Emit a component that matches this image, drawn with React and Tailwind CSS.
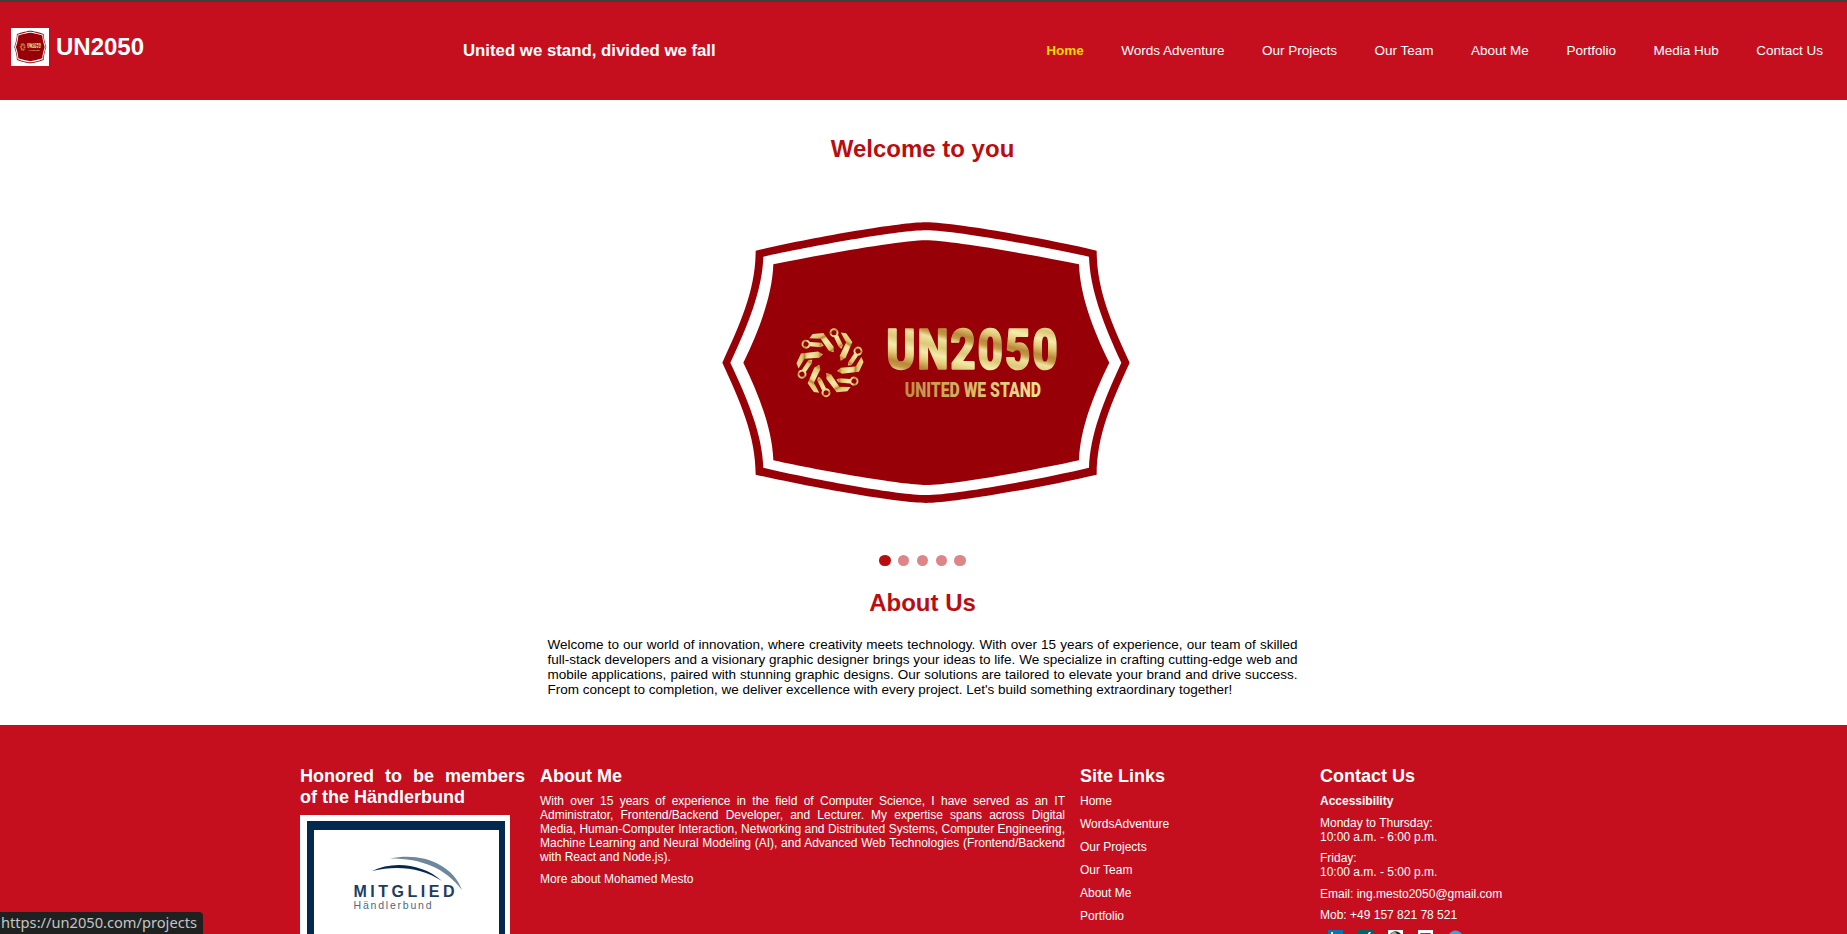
import React, { useId } from "react";

const NAV = ["Words Adventure", "Our Projects", "Our Team", "About Me", "Portfolio", "Media Hub", "Contact Us"];
const SITE_LINKS = ["Home", "WordsAdventure", "Our Projects", "Our Team", "About Me", "Portfolio"];

function Emblem({ className, viewBox, preserveAspectRatio }) {
  const id = useId().replace(/[^a-zA-Z0-9]/g, "");
  const gold = `url(#g${id})`;
  const soft = `url(#s${id})`;
  const ring = `url(#r${id})`;
  return (
    <svg className={className} viewBox={viewBox} preserveAspectRatio={preserveAspectRatio} aria-hidden="true">
      <defs>
        <linearGradient id={`g${id}`} gradientUnits="userSpaceOnUse" x1="600" y1="372" x2="570" y2="492" spreadMethod="repeat">
          <stop offset="0" stopColor="#c39a45" />
          <stop offset="0.12" stopColor="#efe2a0" />
          <stop offset="0.32" stopColor="#dcc878" />
          <stop offset="0.52" stopColor="#f5ecab" />
          <stop offset="0.7" stopColor="#e2cb78" />
          <stop offset="0.9" stopColor="#b9883a" />
          <stop offset="1" stopColor="#c39a45" />
        </linearGradient>
        <linearGradient id={`r${id}`} gradientUnits="userSpaceOnUse" x1="330" y1="400" x2="352" y2="442" spreadMethod="repeat">
          <stop offset="0" stopColor="#f3e9a6" />
          <stop offset="0.45" stopColor="#dfc670" />
          <stop offset="0.6" stopColor="#b98836" />
          <stop offset="0.75" stopColor="#ecd988" />
          <stop offset="1" stopColor="#f3e9a6" />
        </linearGradient>
        <linearGradient id={`s${id}`} x1="0" x2="1" y1="0" y2="0">
          <stop offset="0" stopColor="#bf8c45" />
          <stop offset="0.5" stopColor="#d9ba68" />
          <stop offset="1" stopColor="#f0e594" />
        </linearGradient>
      </defs>
      <path fill="#960006" d="M167 152C340 112 600 67 678 67S1017 112 1190 152C1190 270 1235 370 1289 488C1235 606 1190 706 1190 824C1017 864 756 909 678 909S340 864 167 824C167 706 121 606 67 488C121 370 167 270 167 152Z" />
      <path fill="#fff" d="M190 170C355 134 600 91 678 91S1002 134 1167 170C1170 270 1212 375 1264 488C1212 601 1170 703 1167 803C1002 842 756 885 678 885S355 842 190 803C187 703 144 601 91 488C144 375 187 270 190 170Z" />
      <path fill="#960006" d="M220 193C375 161 610 121 678 121S982 161 1137 193C1140 285 1178 387 1228 488C1178 589 1140 690 1137 781C982 815 746 855 678 855S375 815 220 781C217 690 179 589 130 488C179 387 217 285 220 193Z" />
      <g fill={ring}>
        {[0, 60, 120, 180, 240, 300].map((a) => (
          <g key={a} transform={`rotate(${a} 390 488)`}>
            <circle cx="402" cy="398" r="10.500" fill="none" stroke={ring} strokeWidth="6" />
            <path d="M402 411L414 405L429 436L424 446L416 440Z" />
            <path d="M328 415L338 402L370 399L401 440V457L387 453L362 416Z" />
          </g>
        ))}
      </g>
      <text x="559" y="508" textLength="520" lengthAdjust="spacingAndGlyphs" letterSpacing="7" fontFamily="Roboto,'Liberation Sans',sans-serif" fontWeight="900" fontSize="169" fill={gold} stroke={gold} strokeWidth="5" strokeLinejoin="bevel">UN2050</text>
      <text x="614" y="590" textLength="409" lengthAdjust="spacingAndGlyphs" fontFamily="Roboto,'Liberation Sans',sans-serif" fontWeight="900" fontSize="62" fill={soft}>UNITED WE STAND</text>
    </svg>
  );
}

function MemberBadge() {
  return (
    <div className="mt-[7px] h-[210px] w-[210px] bg-white pl-[7px] pr-[5px] pt-[6px]">
      <div className="h-[198px] border-x-[7px] border-t-[9px] border-[#03294f] border-r-[6px]">
        <svg className="block h-[104px] w-[185px]" viewBox="0 0 185 104" aria-hidden="true">
          <path fill="#6d879c" d="M76 28.500C106 22 138 33 148 60C131 38 108 28.500 76 28.500Z" />
          <path fill="#03294f" d="M58 41C78 31 108 33 128 51C108 38 84 35 58 41Z" />
          <text x="39.5" y="67" textLength="101" fontFamily="'Liberation Sans',sans-serif" fontWeight="700" fontSize="16" fill="#1d3d60">MITGLIED</text>
          <text x="39.5" y="79" textLength="78" fontFamily="'Liberation Sans',sans-serif" fontSize="10.5" fill="#4f6780">Händlerbund</text>
        </svg>
      </div>
    </div>
  );
}

function SocialIcons() {
  return (
    <div className="mt-[8px] flex gap-[15px] pl-2">
      <svg className="size-[15px]" viewBox="0 0 15 15"><path fill="#0277b5" d="M0 0h15v15H0z" /><path fill="#fff" d="M3 2h2v2H3zM3 5.500h2V12H3zM7 5.500h2V12H7z" /></svg>
      <svg className="size-[15px]" viewBox="0 0 15 15"><path fill="#026466" d="M0 0h15v15H0z" /><path fill="#fff" d="M11 2h2L9.500 8l2.500 5h-2L7.500 8z" /></svg>
      <svg className="size-[15px]" viewBox="0 0 15 15"><path fill="#fff" d="M0 0h15v15H0z" /><circle cx="7.500" cy="7.500" r="6.300" fill="#222" /><circle cx="6" cy="5" r="3" fill="#aaa" /></svg>
      <svg className="size-[15px]" viewBox="0 0 15 15"><path fill="#fff" d="M0 0h15v15H0z" /><rect x="2" y="3" width="11" height="9" rx="1" fill="#d3202c" /></svg>
      <svg className="size-[15px]" viewBox="0 0 15 15"><circle cx="7.500" cy="8" r="7.500" fill="#2fa8dc" /></svg>
    </div>
  );
}

export default function App() {
  return (
    <div className="relative flex h-[934px] w-full flex-col overflow-hidden bg-white font-['Liberation_Sans',Arial,sans-serif] text-black">
      <header className="flex h-[100px] shrink-0 border-t-2 border-[#3f403c] bg-[#c50f1f] text-white">
        <div className="flex w-[463px] items-start pl-[11px] pt-[26px]">
          <Emblem className="size-[38px] bg-white" viewBox="-59 -3 1451 982" preserveAspectRatio="none" />
          <span className="ml-[7px] mt-[5px] text-2xl leading-7 font-bold">UN2050</span>
        </div>
        <p className="pt-[39px] text-[16.8px] leading-5 font-bold">United we stand, divided we fall</p>
        <nav className="ml-auto flex gap-[37.5px] pt-[41px] pr-[24px] text-[13.5px] leading-4">
          <a className="font-bold text-[#ffd700]">Home</a>
          {NAV.map((n) => <a key={n}>{n}</a>)}
        </nav>
      </header>

      <main className="flex h-[625px] w-[1845px] shrink-0 flex-col items-center">
        <h2 className="mt-[35px] text-2xl leading-7 font-bold text-[#bb0c10]">Welcome to you</h2>
        <Emblem className="ml-[6px] mt-[37px] h-[320px] w-[450px]" viewBox="3 0 1350 960" />
        <div className="mt-[35px] flex gap-[7.4px]">
          <i className="size-[11.4px] rounded-full bg-[#bb0c10]" />
          {[1, 2, 3, 4].map((n) => <i key={n} className="size-[11.4px] rounded-full bg-[#dd8587]" />)}
        </div>
        <h2 className="mt-[23px] text-2xl leading-7 font-bold text-[#bb0c10]">About Us</h2>
        <p className="mt-[20px] w-[750px] text-justify text-[13.5px] leading-[15px]">
          Welcome to our world of innovation, where creativity meets technology. With over 15 years of experience, our team of skilled full-stack developers and a visionary graphic designer brings your ideas to life. We specialize in crafting cutting-edge web and mobile applications, paired with stunning graphic designs. Our solutions are tailored to elevate your brand and drive success. From concept to completion, we deliver excellence with every project. Let's build something extraordinary together!
        </p>
      </main>

      <footer className="grid h-[209px] shrink-0 grid-cols-[225px_525px_225px_225px] gap-x-[15px] overflow-hidden bg-[#c50f1f] pl-[300px] pt-[41px] text-xs leading-[14px] text-white">
        <section>
          <h3 className="text-justify text-lg leading-[21px] font-bold">Honored to be members of the Händlerbund</h3>
          <MemberBadge />
        </section>
        <section>
          <h3 className="text-lg leading-[21px] font-bold">About Me</h3>
          <p className="mt-[7px] text-justify">
            With over 15 years of experience in the field of Computer Science, I have served as an IT Administrator, Frontend/Backend Developer, and Lecturer. My expertise spans across Digital Media, Human-Computer Interaction, Networking and Distributed Systems, Computer Engineering, Machine Learning and Neural Modeling (AI), and Advanced Web Technologies (Frontend/Backend with React and Node.js).
          </p>
          <p className="mt-[8px]">More about Mohamed Mesto</p>
        </section>
        <section>
          <h3 className="text-lg leading-[21px] font-bold">Site Links</h3>
          <ul className="mt-[7px] flex flex-col gap-[9px]">
            {SITE_LINKS.map((l) => <li key={l}>{l}</li>)}
          </ul>
        </section>
        <section>
          <h3 className="text-lg leading-[21px] font-bold">Contact Us</h3>
          <p className="mt-[7px] font-bold">Accessibility</p>
          <p className="mt-[8px]">Monday to Thursday:<br />10:00 a.m. - 6:00 p.m.</p>
          <p className="mt-[7px]">Friday:<br />10:00 a.m. - 5:00 p.m.</p>
          <p className="mt-[8px]">Email: ing.mesto2050@gmail.com</p>
          <p className="mt-[7px]">Mob: +49 157 821 78 521</p>
          <SocialIcons />
        </section>
      </footer>

      <div className="absolute bottom-0 left-0 h-[22px] w-[203px] rounded-tr-[4px] bg-[#1f2121] pl-[1px] font-['Noto_Sans',sans-serif] text-[14.65px] leading-[21px] whitespace-nowrap text-[#c3c5c6]">
        https://un2050.com/projects
      </div>
    </div>
  );
}
